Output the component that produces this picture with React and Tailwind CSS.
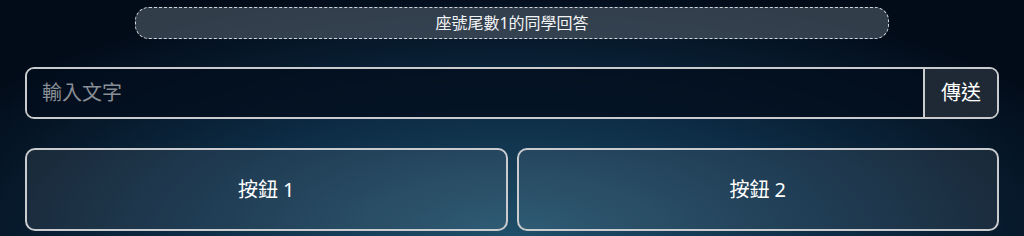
import React from 'react';

const font = { fontFamily: '"Noto Sans", "Noto Sans CJK TC", sans-serif' };

export default function App() {
  return (
    <div
      className="w-[1024px] h-[236px] overflow-hidden text-white bg-[radial-gradient(ellipse_70%_120%_at_50%_100%,#1f4f6a_0%,#0d2c45_45%,#020b18_90%)]"
      style={font}
    >
      <div className="px-[25px] pt-[7px]">
        <div className="flex justify-center">
          <div className="w-[754px] h-[32px] rounded-[14px] border border-dashed border-gray-300 bg-[#475260]/70 flex items-center justify-center text-[16px] text-gray-100">
            座號尾數1的同學回答
          </div>
        </div>

        <div className="mt-[28px] flex h-[52px] rounded-[9px] border-2 border-[#c9cbce] overflow-hidden">
          <input
            className="flex-1 bg-[#020e1d]/80 px-[15px] text-[20px] text-gray-200 placeholder:text-[#8a8f96] outline-none"
            placeholder="輸入文字"
          />
          <button className="w-[74px] border-l-2 border-[#c9cbce] bg-[#1e2935] text-[20px] text-white">
            傳送
          </button>
        </div>

        <div className="mt-[29px] grid grid-cols-2 gap-[9px]">
          <button className="h-[83px] rounded-[10px] border-2 border-[#c9cbce] bg-white/[0.08] text-[20px] text-white">
            按鈕 1
          </button>
          <button className="h-[83px] rounded-[10px] border-2 border-[#c9cbce] bg-white/[0.08] text-[20px] text-white">
            按鈕 2
          </button>
        </div>
      </div>
    </div>
  );
}
